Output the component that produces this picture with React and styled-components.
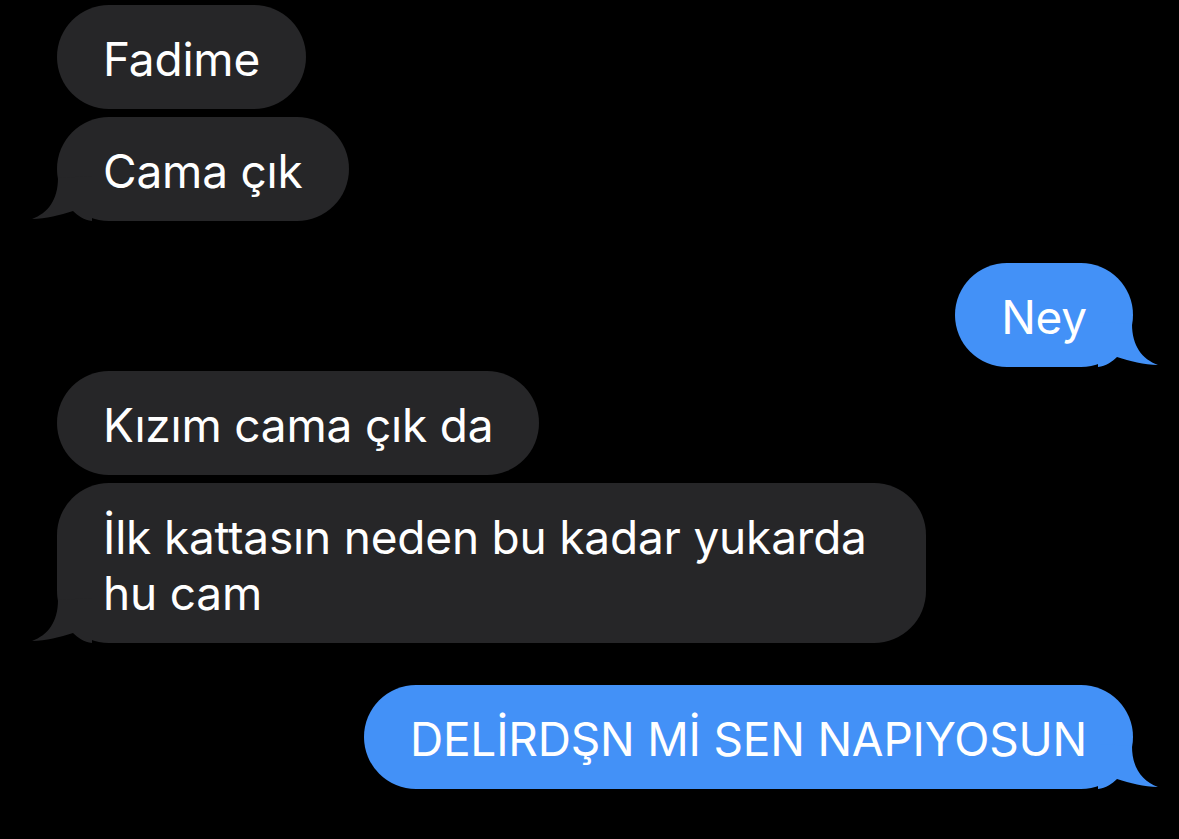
import React from 'react';
import styled, { createGlobalStyle } from 'styled-components';

const GlobalStyle = createGlobalStyle`
  html, body {
    margin: 0;
    padding: 0;
    background: #000;
  }
  body {
    font-family: Inter, "Noto Sans", "Liberation Sans", sans-serif;
    -webkit-font-smoothing: antialiased;
  }
`;

const Thread = styled.div`
  display: flex;
  flex-direction: column;
  width: 1179px;
  height: 839px;
  padding: 5px 46px 0 57px;
  box-sizing: border-box;
  background: #000;
  overflow: hidden;
`;

const Row = styled.div`
  display: flex;
  justify-content: ${(p) => (p.$mine ? 'flex-end' : 'flex-start')};
  margin-top: ${(p) => p.$gap || 0}px;
`;

const Bubble = styled.div`
  position: relative;
  max-width: 869px;
  box-sizing: border-box;
  padding: 26px 46px 22px;
  border-radius: 52px;
  background: ${(p) => (p.$mine ? '#4391f7' : '#262628')};
  color: #fff;
  font-size: 46px;
  line-height: 56px;
  letter-spacing: -0.2px;
`;

const Tail = styled.svg`
  position: absolute;
  bottom: 0;
  width: 60px;
  height: 45px;
  ${(p) =>
    p.$mine
      ? 'right: -25px; transform: scaleX(-1);'
      : 'left: -25px;'}
`;

const BubbleTail = ({ mine }) => (
  <Tail $mine={mine} viewBox="0 0 60 45">
    <path
      d="M26 2 C26 24 16 37 0 43 C14 43 28 39 41 35 C46 40 52 44 60 45 L60 0 Z"
      fill={mine ? '#4391f7' : '#262628'}
    />
  </Tail>
);

const messages = [
  { text: 'Fadime', gap: 0 },
  { text: 'Cama çık', gap: 8, tail: true },
  { text: 'Ney', gap: 42, mine: true, tail: true },
  { text: 'Kızım cama çık da', gap: 4 },
  { text: 'İlk kattasın neden bu kadar yukarda hu cam', gap: 8, tail: true },
  { text: 'DELİRDŞN Mİ SEN NAPIYOSUN', gap: 42, mine: true, tail: true },
];

export default function App() {
  return (
    <>
      <GlobalStyle />
      <Thread>
        {messages.map((m, i) => (
          <Row key={i} $mine={m.mine} $gap={m.gap}>
            <Bubble $mine={m.mine}>
              {m.tail && <BubbleTail mine={m.mine} />}
              {m.text}
            </Bubble>
          </Row>
        ))}
      </Thread>
    </>
  );
}
